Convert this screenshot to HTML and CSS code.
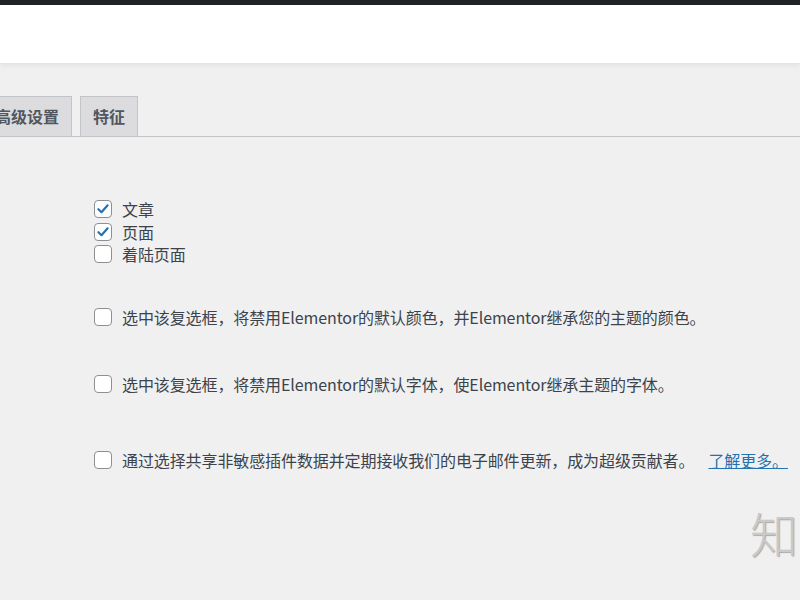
FILE: index.html
```html
<!DOCTYPE html>
<html lang="zh-CN">
<head>
  <meta charset="UTF-8">
  <title>Elementor 设置</title>
  <link rel="stylesheet" href="styles.css">
</head>
<body>
  <div class="topbar"></div>
  <div class="header"></div>
  <div class="nav-tabs">
    <a class="nav-tab">高级设置</a>
    <a class="nav-tab">特征</a>
  </div>
  <main class="settings">
    <div class="group">
      <label class="row">
        <span class="box"><svg width="18" height="18" viewBox="0 0 18 18"><path d="M3.8 9.2 L7.3 12.6 L14.2 4.8" fill="none" stroke="#2271b1" stroke-width="2.4" stroke-linecap="round" stroke-linejoin="round"/></svg></span>
        <span>文章</span>
      </label>
      <label class="row">
        <span class="box"><svg width="18" height="18" viewBox="0 0 18 18"><path d="M3.8 9.2 L7.3 12.6 L14.2 4.8" fill="none" stroke="#2271b1" stroke-width="2.4" stroke-linecap="round" stroke-linejoin="round"/></svg></span>
        <span>页面</span>
      </label>
      <label class="row">
        <span class="box"></span>
        <span>着陆页面</span>
      </label>
    </div>
    <label class="row colors">
      <span class="box"></span>
      <span>选中该复选框，将禁用Elementor的默认颜色，并Elementor继承您的主题的颜色。</span>
    </label>
    <label class="row fonts">
      <span class="box"></span>
      <span>选中该复选框，将禁用Elementor的默认字体，使Elementor继承主题的字体。</span>
    </label>
    <label class="row tracker">
      <span class="box"></span>
      <span>通过选择共享非敏感插件数据并定期接收我们的电子邮件更新，成为超级贡献者。<a class="more" href="#">了解更多。</a></span>
    </label>
  </main>
  <div class="watermark">知乎</div>
</body>
</html>
```
FILE: styles.css
```css
body {
  margin: 0;
  background-color: #f0f0f1;
  font-family: "Noto Sans CJK SC", "Noto Sans", sans-serif;
  color: #3c434a;
  font-size: 16px;
  overflow: hidden;
  height: 600px;
  position: relative;
}
.topbar {
  height: 5px;
  background-color: #1d2327;
}
.header {
  height: 58px;
  background-color: #fff;
  border-bottom: 1px solid #e4e4e4;
  box-shadow: 0 3px 4px rgba(0, 0, 0, 0.04);
}
.nav-tabs {
  display: flex;
  gap: 8px;
  margin-top: 32px;
  margin-left: -18px;
  border-bottom: 1px solid #c3c4c7;
}
.nav-tab {
  padding: 10px 12px;
  line-height: 19px;
  font-size: 16px;
  font-weight: 600;
  color: #50575e;
  background-color: #dcdcde;
  border: 1px solid #c3c4c7;
  border-bottom: none;
}
.settings {
  padding-left: 94px;
}
.group {
  margin-top: 61px;
}
.row {
  display: flex;
  align-items: center;
  gap: 10px;
  height: 22.5px;
  white-space: nowrap;
  letter-spacing: -0.1px;
}
.box {
  flex: none;
  width: 16px;
  height: 16px;
  border: 1px solid #8c8f94;
  border-radius: 4px;
  background-color: #fff;
  display: flex;
  align-items: center;
  justify-content: center;
}
.box svg {
  display: block;
}
.colors {
  margin-top: 40px;
}
.fonts {
  margin-top: 45px;
}
.tracker {
  margin-top: 53px;
}
.more {
  color: #2271b1;
  margin-left: 14px;
}
.watermark {
  position: absolute;
  left: 750px;
  top: 497px;
  font-size: 48px;
  font-weight: 300;
  color: #c9c9c9;
  letter-spacing: 4px;
  white-space: nowrap;
  text-shadow: 1px 1px 1px #aaa;
}
```
